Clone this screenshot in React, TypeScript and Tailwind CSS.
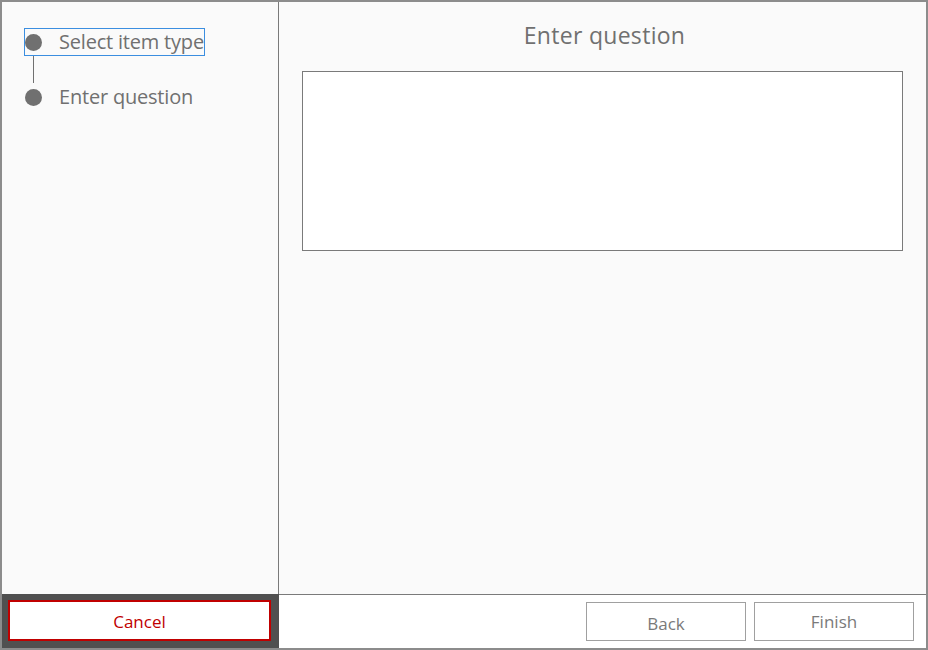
import React from "react"

const font = { fontFamily: '"Open Sans", "Noto Sans", sans-serif' }

function Step({ label, focused }: { label: string; focused?: boolean }) {
	return (
		<div className="relative flex items-center h-[28px]">
			<div className="w-[17px] h-[17px] rounded-full bg-[#707070] ml-[1px] shrink-0"></div>
			<span className="ml-[17px] text-[20px] leading-none text-[#707070] tracking-[-0.2px]">{label}</span>
			{focused && <div className="absolute left-0 top-0 h-[28px] w-[181px] border border-[#3b8ee0]"></div>}
		</div>
	)
}

export default function App() {
	return (
		<div style={font} className="w-[928px] h-[650px] border-2 border-[#8c8c8c] flex flex-col bg-[#fafafa]">
			<div className="flex flex-1">
				<div className="w-[277px] border-r border-[#7a7a7a] pt-[26px] pl-[22px]">
					<Step label="Select item type" focused />
					<div className="w-[1px] h-[27px] bg-[#707070] ml-[9px]"></div>
					<Step label="Enter question" />
				</div>
				<div className="flex-1 flex flex-col px-[23px]">
					<h1 className="text-center text-[23px] text-[#707070] mt-[16px] leading-[34px] tracking-[0.3px] pl-[4px]">Enter question</h1>
					<div className="mt-[19px] h-[180px] w-[601px] border border-[#7a7a7a] bg-white"></div>
				</div>
			</div>
			<div className="flex h-[54px]">
				<div className="w-[277px] bg-[#505050] pt-[6px] pl-[6px]">
					<button className="w-[263px] h-[41px] bg-white border-2 border-[#c00000] text-[#c00000] text-[17px] pt-[3px]">
						Cancel
					</button>
				</div>
				<div className="flex-1 bg-white border-t border-[#7a7a7a] flex justify-end gap-[8px] pt-[7px] pr-[12px]">
					<button className="w-[160px] h-[39px] border border-[#a0a0a0] bg-white text-[#7a7a7a] text-[17px] pt-[4px]">Back</button>
					<button className="w-[160px] h-[39px] border border-[#a0a0a0] bg-white text-[#7a7a7a] text-[17px] pt-[1px]">Finish</button>
				</div>
			</div>
		</div>
	)
}
